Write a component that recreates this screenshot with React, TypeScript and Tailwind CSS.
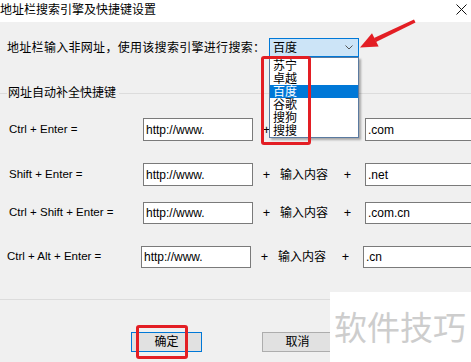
import React from 'react'

const font = "font-['Noto_Sans','Noto_Sans_CJK_SC',sans-serif]"
const latin = "font-['Liberation_Sans','Noto_Sans_CJK_SC',sans-serif]"

interface RowProps {
  keys: string
  suffix: string
  className?: string
}

const ShortcutRow: React.FC<RowProps> = ({ keys, suffix, className }) => {
  return (
    <div className={`flex items-center h-[23px] whitespace-nowrap ${className ?? ''}`}>
      <div className={`w-[134px] shrink-0 text-[11.5px] text-black ${latin}`}>{keys}</div>
      <div className={`w-[110px] shrink-0 h-full bg-white border border-[#7a7a7a] flex items-center pl-[2px] text-[12px] text-black ${latin}`}>
        http://www.
      </div>
      <div className="w-[27px] shrink-0 text-center text-[13px]">+</div>
      <div className="w-[50px] shrink-0 text-[12px]">输入内容</div>
      <div className="w-[35px] shrink-0 text-center text-[13px]">+</div>
      <div className={`w-[120px] shrink-0 h-full bg-white border border-[#7a7a7a] flex items-center pl-[2px] text-[12px] text-black ${latin}`}>
        {suffix}
      </div>
    </div>
  )
}

const engines = ['苏宁', '卓越', '百度', '谷歌', '搜狗', '搜搜']

export default function App() {
  return (
    <div className={`relative w-[471px] h-[362px] overflow-hidden bg-[#f0f0f0] ${font}`}>
      {/* title bar */}
      <div className="h-[22px] bg-white flex items-center justify-between pr-[3px]">
        <span className="text-[12px] text-black leading-none -mt-[2px] whitespace-nowrap">地址栏搜索引擎及快捷键设置</span>
        <svg width="11" height="11" viewBox="0 0 11 11" className="mr-[1px] -mt-[4px]">
          <path d="M0.5 0.5L10.5 10.5M10.5 0.5L0.5 10.5" stroke="#111" strokeWidth="1" />
        </svg>
      </div>

      {/* search engine */}
      <div className="flex items-center mt-[16px] pl-[7px] h-[19px]">
        <div className="w-[262px] shrink-0 text-[12px] tracking-[0.3px] text-black whitespace-nowrap">
          地址栏输入非网址，使用该搜索引擎进行搜索：
        </div>
        <div className="w-[90px] shrink-0 h-[19px] bg-[#cce4f7] border border-[#0078d7] flex items-center justify-between pl-[3px] pr-[5px] text-[12px]">
          <span>百度</span>
          <svg width="8" height="5" viewBox="0 0 8 5">
            <path d="M0.5 0.5L4 4L7.5 0.5" stroke="#555" strokeWidth="1" fill="none" />
          </svg>
        </div>
      </div>

      {/* group header */}
      <div className="flex items-center mt-[28px] h-[16px]">
        <div className="w-[7px] h-px bg-[#dcdcdc]" />
        <span className="text-[12px] text-black px-[1px] whitespace-nowrap">网址自动补全快捷键</span>
        <div className="flex-1 h-px bg-[#dcdcdc] ml-[2px]" />
      </div>

      <div className="pl-[9px]">
        <ShortcutRow keys="Ctrl + Enter =" suffix=".com" className="mt-[17px]" />
        <ShortcutRow keys="Shift + Enter =" suffix=".net" className="mt-[22px]" />
        <ShortcutRow keys="Ctrl + Shift + Enter =" suffix=".com.cn" className="mt-[16px] !h-[22px]" />
        <ShortcutRow keys="Ctrl + Alt + Enter =" suffix=".cn" className="mt-[22px] -ml-[2px] !h-[22px]" />
      </div>

      {/* bottom separator */}
      <div className="mt-[31px] h-px bg-[#dcdcdc]" />

      {/* buttons */}
      <div className="flex mt-[32px] pl-[131px] gap-[60px]">
        <button className="w-[71px] h-[20px] bg-[#e1e1e1] border-[1.5px] border-[#0078d7] text-[12px] leading-none">
          确定
        </button>
        <button className="w-[71px] h-[20px] bg-[#e1e1e1] border border-[#adadad] text-[12px] leading-none">
          取消
        </button>
      </div>

      {/* open dropdown list */}
      <div className="absolute left-[269px] top-[57px] w-[90px] h-[81px] pt-[1px] bg-white border border-[#5a7aa0] shadow-[2px_2px_2px_rgba(0,0,0,0.3)]">
        {engines.map(name => (
          <div
            key={name}
            className={`h-[13px] leading-[13px] pl-[3px] text-[12px] ${
              name === '百度' ? 'bg-[#0078d7] text-white' : 'text-black'
            }`}
          >
            {name}
          </div>
        ))}
      </div>

      {/* red annotations */}
      <div className="absolute left-[261px] top-[56px] w-[50px] h-[89px] border-[3px] border-[#e31e24] rounded-[3px]" />
      <div className="absolute left-[136px] top-[325px] w-[52px] h-[34px] border-[3px] border-[#e31e24] rounded-[3px]" />
      <svg className="absolute left-0 top-0 pointer-events-none" width="471" height="362" viewBox="0 0 471 362">
        <polygon points="414,19.5 415.5,22.5 376,42 374,38" fill="#e31e24" />
        <polygon points="360,47.5 378.6,46.4 372,33.2" fill="#e31e24" />
      </svg>

      {/* watermark */}
      <div className="absolute left-[330px] top-[292px] w-[141px] h-[70px] bg-white flex items-center pl-[4px]">
        <span className="text-[33px] text-[#cdcdcd] leading-none whitespace-nowrap">软件技巧</span>
      </div>
    </div>
  )
}
